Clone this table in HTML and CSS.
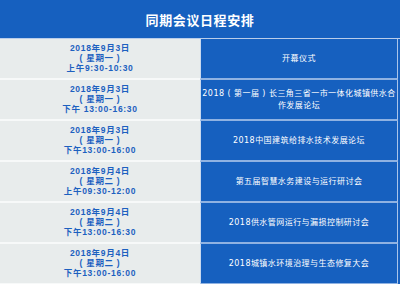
FILE: index.html
```html
<!DOCTYPE html>
<html lang="zh-CN">
<head>
<meta charset="utf-8">
<title>同期会议日程安排</title>
<link rel="stylesheet" href="styles.css">
</head>
<body>
<div class="schedule">
  <div class="title">同期会议日程安排</div>
  <div class="row">
    <div class="when"><span>2018年9月3日</span><span>( 星期一 )</span><span>上午9:30-10:30</span></div>
    <div class="what">开幕仪式</div>
  </div>
  <div class="row">
    <div class="when"><span>2018年9月3日</span><span>( 星期一 )</span><span>下午 13:00-16:30</span></div>
    <div class="what">2018 ( 第一届 ) 长三角三省一市一体化城镇供水合<br>作发展论坛</div>
  </div>
  <div class="row">
    <div class="when"><span>2018年9月3日</span><span>( 星期一 )</span><span>下午13:00-16:00</span></div>
    <div class="what">2018中国建筑给排水技术发展论坛</div>
  </div>
  <div class="row">
    <div class="when"><span>2018年9月4日</span><span>( 星期二 )</span><span>上午09:30-12:00</span></div>
    <div class="what">第五届智慧水务建设与运行研讨会</div>
  </div>
  <div class="row">
    <div class="when"><span>2018年9月4日</span><span>( 星期二 )</span><span>下午13:00-16:30</span></div>
    <div class="what">2018供水管网运行与漏损控制研讨会</div>
  </div>
  <div class="row">
    <div class="when"><span>2018年9月4日</span><span>( 星期二 )</span><span>下午13:00-16:00</span></div>
    <div class="what">2018城镇水环境治理与生态修复大会</div>
  </div>
</div>
</body>
</html>
```
FILE: styles.css
```css
html, body {
  margin: 0;
  padding: 0;
}
body {
  background: #1660bf;
  font-family: "DejaVu Sans", "Noto Sans CJK SC", sans-serif;
}
.schedule {
  width: 400px;
  height: 284px;
  overflow: hidden;
}
.title {
  height: 38px;
  border-bottom: 1px solid #b9cdea;
  display: flex;
  align-items: center;
  justify-content: center;
  color: #ffffff;
  font-weight: bold;
  font-size: 13px;
  letter-spacing: 0.6px;
}
.row {
  display: grid;
  grid-template-columns: 200px 198px;
  height: 41px;
}
.when {
  background: #e8ecec;
  border-bottom: 2px solid #f7f9f9;
  display: flex;
  flex-direction: column;
  align-items: center;
  justify-content: center;
  color: #1c60c0;
  font-family: "Liberation Sans", "Noto Sans CJK SC", sans-serif;
  font-weight: bold;
  font-size: 8.5px;
  line-height: 9.7px;
  letter-spacing: 0.7px;
  padding-top: 1px;
}
.what {
  background: #1660bf;
  border-left: 1px solid #c9d9ef;
  border-right: 1px solid #a9c4ea;
  border-bottom: 2px solid #8fb2e2;
  display: flex;
  align-items: center;
  justify-content: center;
  text-align: center;
  white-space: nowrap;
  color: #ffffff;
  font-size: 8px;
  line-height: 12px;
  letter-spacing: 0.45px;
  padding-top: 1px;
}
```
